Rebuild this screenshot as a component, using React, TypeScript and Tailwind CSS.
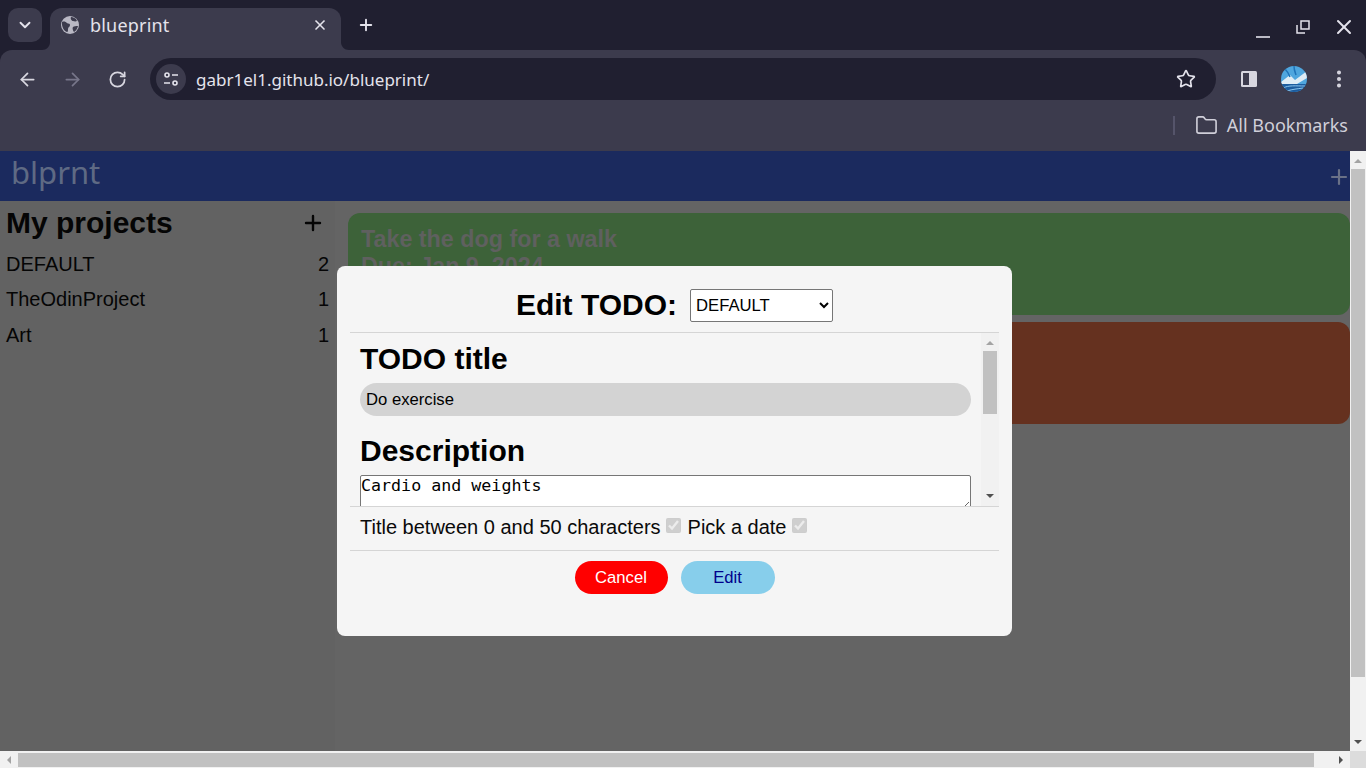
import { ArrowLeft, ArrowRight, ChevronDown, EllipsisVertical, Folder, Plus, RotateCw, Star, X } from 'lucide-react'

const PAGE_FONT = "font-['Liberation_Sans',Arial,sans-serif]"
const UI_FONT = "font-['Noto_Sans',sans-serif]"

const projects = [
  { name: 'DEFAULT', count: 2 },
  { name: 'TheOdinProject', count: 1 },
  { name: 'Art', count: 1 },
]

function Arrow({ dir, color }: { dir: 'up' | 'down' | 'left' | 'right'; color: string }) {
  const points = {
    up: '0,8 8,0 16,8',
    down: '0,0 16,0 8,8',
    left: '8,0 8,16 0,8',
    right: '0,0 0,16 8,8',
  }[dir]
  const vertical = dir === 'up' || dir === 'down'
  return (
    <svg width={vertical ? 8 : 4} height={vertical ? 4 : 8} viewBox={vertical ? '0 0 16 8' : '0 0 8 16'} fill={color}>
      <polygon points={points} />
    </svg>
  )
}

function TabStrip() {
  return (
    <div className="flex h-[50px] shrink-0 items-end bg-[#201f30] pl-2">
      <div className="mb-2 grid size-[34px] place-items-center rounded-[10px] bg-[#3c3b4d] text-[#e4e3ec]">
        <ChevronDown size={18} strokeWidth={2.5} />
      </div>
      <div className="relative ml-2 flex h-[42px] w-[291px] items-center rounded-t-xl bg-[#3c3b4d] pb-[8px] pl-[11px] pr-[13px]">
        <svg className="absolute bottom-0 left-[-8px]" width="8" height="8" viewBox="0 0 8 8" fill="#3c3b4d">
          <path d="M8 0v8H0c4.500 0 8-3.500 8-8z" />
        </svg>
        <svg className="absolute bottom-0 right-[-8px]" width="8" height="8" viewBox="0 0 8 8" fill="#3c3b4d">
          <path d="M0 0v8h8C3.500 8 0 4.500 0 0z" />
        </svg>
        <svg width="18" height="18" viewBox="0 0 18 18" className="shrink-0">
          <circle cx="9" cy="9" r="9" fill="#b9b8c4" />
          <path d="M1 6c2-1 4 0 5 1s3 0 3 2-2 2-2 4 0 3-1 3C3 15 .5 11 1 6zM10 1c2 0 5 1 6 4-2 1-3 0-4 0S9 3 10 1zM12 11c1-1 3-1 5-1-.5 2-2 5-4 6-1-1-2-4-1-5z" fill="#3c3b4d" />
        </svg>
        <span className={`${UI_FONT} ml-[11px] text-[18px] leading-none tracking-[0.2px] text-[#e4e3ec]`}>blueprint</span>
        <X size={16} strokeWidth={2.5} className="ml-auto text-[#e4e3ec]" />
      </div>
      <Plus size={18} strokeWidth={2.5} className="mb-[16px] ml-4 text-[#e4e3ec]" />
      <div className="ml-auto mb-[10px] flex items-center text-[#e4e3ec]">
        <svg width="16" height="16" viewBox="0 0 16 16" className="mr-[24px] mt-[10px]">
          <path d="M1 13h14" stroke="currentColor" strokeWidth="1.600" />
        </svg>
        <svg width="16" height="16" viewBox="0 0 16 16" fill="none" stroke="currentColor" strokeWidth="1.500" className="mr-[21px]">
          <rect x="6" y="2" width="8" height="8" />
          <path d="M2 6v8h8" />
        </svg>
        <X size={24} strokeWidth={2} className="mr-[10px]" />
      </div>
    </div>
  )
}

function Toolbar() {
  return (
    <div className="h-[101px] shrink-0 bg-[#201f30]">
      <div className="h-full rounded-t-xl bg-[#3c3b4d]">
        <div className="flex h-[58px] items-center pb-[8px] pt-[8px] text-[#d8d7e0]">
          <ArrowLeft size={21} strokeWidth={2} className="ml-[17px]" />
          <ArrowRight size={21} strokeWidth={2} className="ml-[24px] text-[#77768a]" />
          <RotateCw size={19} strokeWidth={2.2} className="ml-[25px]" />
          <div className="ml-[23px] flex h-[42px] w-[1066px] items-center rounded-full bg-[#201f30] pl-[6px] pr-[20px]">
            <div className="grid size-[30px] place-items-center rounded-full bg-[#3c3b4d]">
              <svg width="16" height="16" viewBox="0 0 16 16" fill="none" stroke="#e4e3ec" strokeWidth="1.600">
                <circle cx="4" cy="4" r="2" />
                <path d="M9 4h6M1 12h6" />
                <circle cx="12" cy="12" r="2" />
              </svg>
            </div>
            <span className={`${UI_FONT} ml-[10px] text-[17px] leading-none text-[#e4e3ec]`}>gabr1el1.github.io/blueprint/</span>
            <Star size={20} strokeWidth={2} className="ml-auto text-[#e4e3ec]" />
          </div>
          <svg width="18" height="18" viewBox="0 0 18 18" className="ml-[24px]">
            <rect x="1" y="1" width="16" height="16" rx="1.500" fill="#d8d7e0" />
            <rect x="3" y="3" width="6" height="12" fill="#3c3b4d" />
          </svg>
          <svg width="26" height="26" viewBox="0 0 26 26" className="ml-[23px]">
            <defs>
              <clipPath id="avatar">
                <circle cx="13" cy="13" r="13" />
              </clipPath>
            </defs>
            <g clipPath="url(#avatar)">
              <rect width="26" height="26" fill="#4fa6de" />
              <path d="M0 16 9 9l5 5 12-9v7l-10 6H0z" fill="#dfecf5" />
              <path d="M0 18h26v8H0z" fill="#1d5c9e" />
              <path d="M2 22c6-3 12-2 22-2M6 25c6-2 10-2 16-3" stroke="#8cc6ee" fill="none" />
              <path d="M4 3c3 3 4 5 5 8M13 0c0 4 1 6 2 9" stroke="#1f73b8" strokeWidth="1.500" fill="none" />
            </g>
          </svg>
          <EllipsisVertical size={22} strokeWidth={2.4} className="ml-[21px]" />
        </div>
        <div className="flex h-[43px] items-center justify-end pb-[9px] pr-[18px] text-[#d0cfd9]">
          <div className="h-[19px] w-[2px] bg-[#55546a]" />
          <Folder size={23} strokeWidth={1.7} className="ml-[20px]" />
          <span className={`${UI_FONT} ml-[9px] text-[18px] leading-none`}>All Bookmarks</span>
        </div>
      </div>
    </div>
  )
}

function Sidebar() {
  return (
    <aside className={`${PAGE_FONT} w-[335px] shrink-0 bg-[#626262] pl-[6px] pr-[6px] text-[#050505]`}>
      <div className="flex h-[44px] items-center justify-between pr-[4px]">
        <h2 className="text-[30px] font-bold leading-none">My projects</h2>
        <Plus size={24} strokeWidth={2.4} />
      </div>
      <ul className="mt-[2px]">
        {projects.map((p) => (
          <li key={p.name} className="flex h-[35.500px] items-center justify-between pb-[2px] text-[20px] leading-none">
            <span>{p.name}</span>
            <span>{p.count}</span>
          </li>
        ))}
      </ul>
    </aside>
  )
}

function Card({ color, title, due }: { color: string; title?: string; due?: string }) {
  return (
    <div className={`h-[102px] w-[1002px] shrink-0 rounded-xl px-[13px] py-[13px] text-[23.300px] font-bold leading-[27px] text-[#5f605f] ${color}`}>
      {title ? <div>{title}</div> : null}
      {due ? <div>{due}</div> : null}
    </div>
  )
}

function Modal() {
  return (
    <div className={`${PAGE_FONT} absolute left-[337px] top-[115px] flex h-[370px] w-[675px] flex-col rounded-lg bg-[#f5f5f5] px-[13px] text-black`}>
      <div className="flex h-[67px] shrink-0 items-center justify-center border-b border-[#d5d5d5] pt-[12px]">
        <span className="text-[30px] font-bold leading-none">Edit TODO:</span>
        <select
          defaultValue="DEFAULT"
          className="ml-[13px] h-[33px] w-[143px] rounded-[2px] border border-[#767676] bg-white pl-[1px] text-[16.670px] text-black [appearance:auto]"
        >
          <option>DEFAULT</option>
        </select>
      </div>
      <div className="flex h-[173px] shrink-0 overflow-hidden">
        <div className="w-[631px] shrink-0 overflow-hidden px-[10px]">
          <h3 className="mt-[9px] text-[30px] font-bold leading-[34px]">TODO title</h3>
          <div className="mt-[7px] flex h-[33px] items-center rounded-full bg-[#d3d3d3] pl-[6px] text-[16.670px]">Do exercise</div>
          <h3 className="mt-[18px] text-[30px] font-bold leading-[34px]">Description</h3>
          <textarea
            readOnly
            value="Cardio and weights"
            className="mt-[7px] block h-[36px] w-[611px] rounded-[2px] border border-[#767676] bg-white font-['DejaVu_Sans_Mono',monospace] text-[16.670px] leading-[19px] text-black outline-none"
          />
        </div>
        <div className="flex w-[18px] shrink-0 flex-col items-center bg-[#f1f1f1]">
          <div className="grid h-[18px] w-full place-items-center pt-[2px]">
            <Arrow dir="up" color="#a3a3a3" />
          </div>
          <div className="h-[63px] w-[14px] bg-[#c1c1c1]" />
          <div className="mt-auto grid h-[18px] w-full place-items-center pb-[2px]">
            <Arrow dir="down" color="#505050" />
          </div>
        </div>
      </div>
      <div className="flex h-[45px] shrink-0 items-center border-y border-[#d5d5d5] pb-[4px] pl-[10px] text-[20px] leading-none text-[#0a0a0a]">
        <span>Title between 0 and 50 characters</span>
        <input type="checkbox" checked disabled readOnly className="mb-[3px] ml-[5px] size-[15px] [appearance:auto]" />
        <span className="ml-[7px]">Pick a date</span>
        <input type="checkbox" checked disabled readOnly className="mb-[3px] ml-[5px] size-[15px] [appearance:auto]" />
      </div>
      <div className="mt-[10px] flex justify-center gap-[13px] text-[16.670px]">
        <button className="h-[33px] w-[93px] rounded-full bg-[#ff0000] text-white">Cancel</button>
        <button className="h-[33px] w-[94px] rounded-full bg-[#87ceeb] text-[#00008b]">Edit</button>
      </div>
    </div>
  )
}

function Page() {
  return (
    <div className="relative flex min-h-0 flex-1">
      <div className="flex min-w-0 flex-1 flex-col overflow-hidden">
        <header className="flex h-[50px] shrink-0 items-center justify-between bg-[#1b2a5e] pl-[11px] text-[#5f6a84]">
          <span className={`${UI_FONT} pb-[9px] text-[31px] leading-[40px]`}>blprnt</span>
          <Plus size={24} strokeWidth={2.2} className="mr-[-1px] mt-[2px] shrink-0 text-[#6a7187]" />
        </header>
        <div className="flex min-h-0 flex-1">
          <Sidebar />
          <main className={`${PAGE_FONT} flex min-w-0 flex-1 flex-col gap-[7px] overflow-hidden bg-[#646464] pl-[13px] pt-[12px]`}>
            <Card color="bg-[#3d6239]" title="Take the dog for a walk" due="Due: Jan 9, 2024" />
            <Card color="bg-[#65311f]" />
          </main>
        </div>
      </div>
      <div className="flex w-[16px] shrink-0 flex-col items-center bg-[#f1f1f1]">
        <div className="grid h-[18px] w-full place-items-center pt-[1px]">
          <Arrow dir="up" color="#a3a3a3" />
        </div>
        <div className="h-[508px] w-[14px] bg-[#c1c1c1]" />
        <div className="mt-auto grid h-[18px] w-full place-items-center">
          <Arrow dir="down" color="#505050" />
        </div>
      </div>
      <Modal />
    </div>
  )
}

function BottomScrollbar() {
  return (
    <div className="flex h-[17px] shrink-0 bg-[#f1f1f1]">
      <div className="grid w-[18px] place-items-center">
        <Arrow dir="left" color="#a3a3a3" />
      </div>
      <div className="my-[1.500px] h-[14px] w-[1296px] bg-[#c1c1c1]" />
      <div className="ml-auto grid w-[18px] place-items-center">
        <Arrow dir="right" color="#505050" />
      </div>
      <div className="w-[16px] bg-[#dcdcdc]" />
    </div>
  )
}

export default function App() {
  return (
    <div className="flex h-[768px] w-[1366px] flex-col overflow-hidden bg-[#201f30]">
      <TabStrip />
      <Toolbar />
      <Page />
      <BottomScrollbar />
    </div>
  )
}
